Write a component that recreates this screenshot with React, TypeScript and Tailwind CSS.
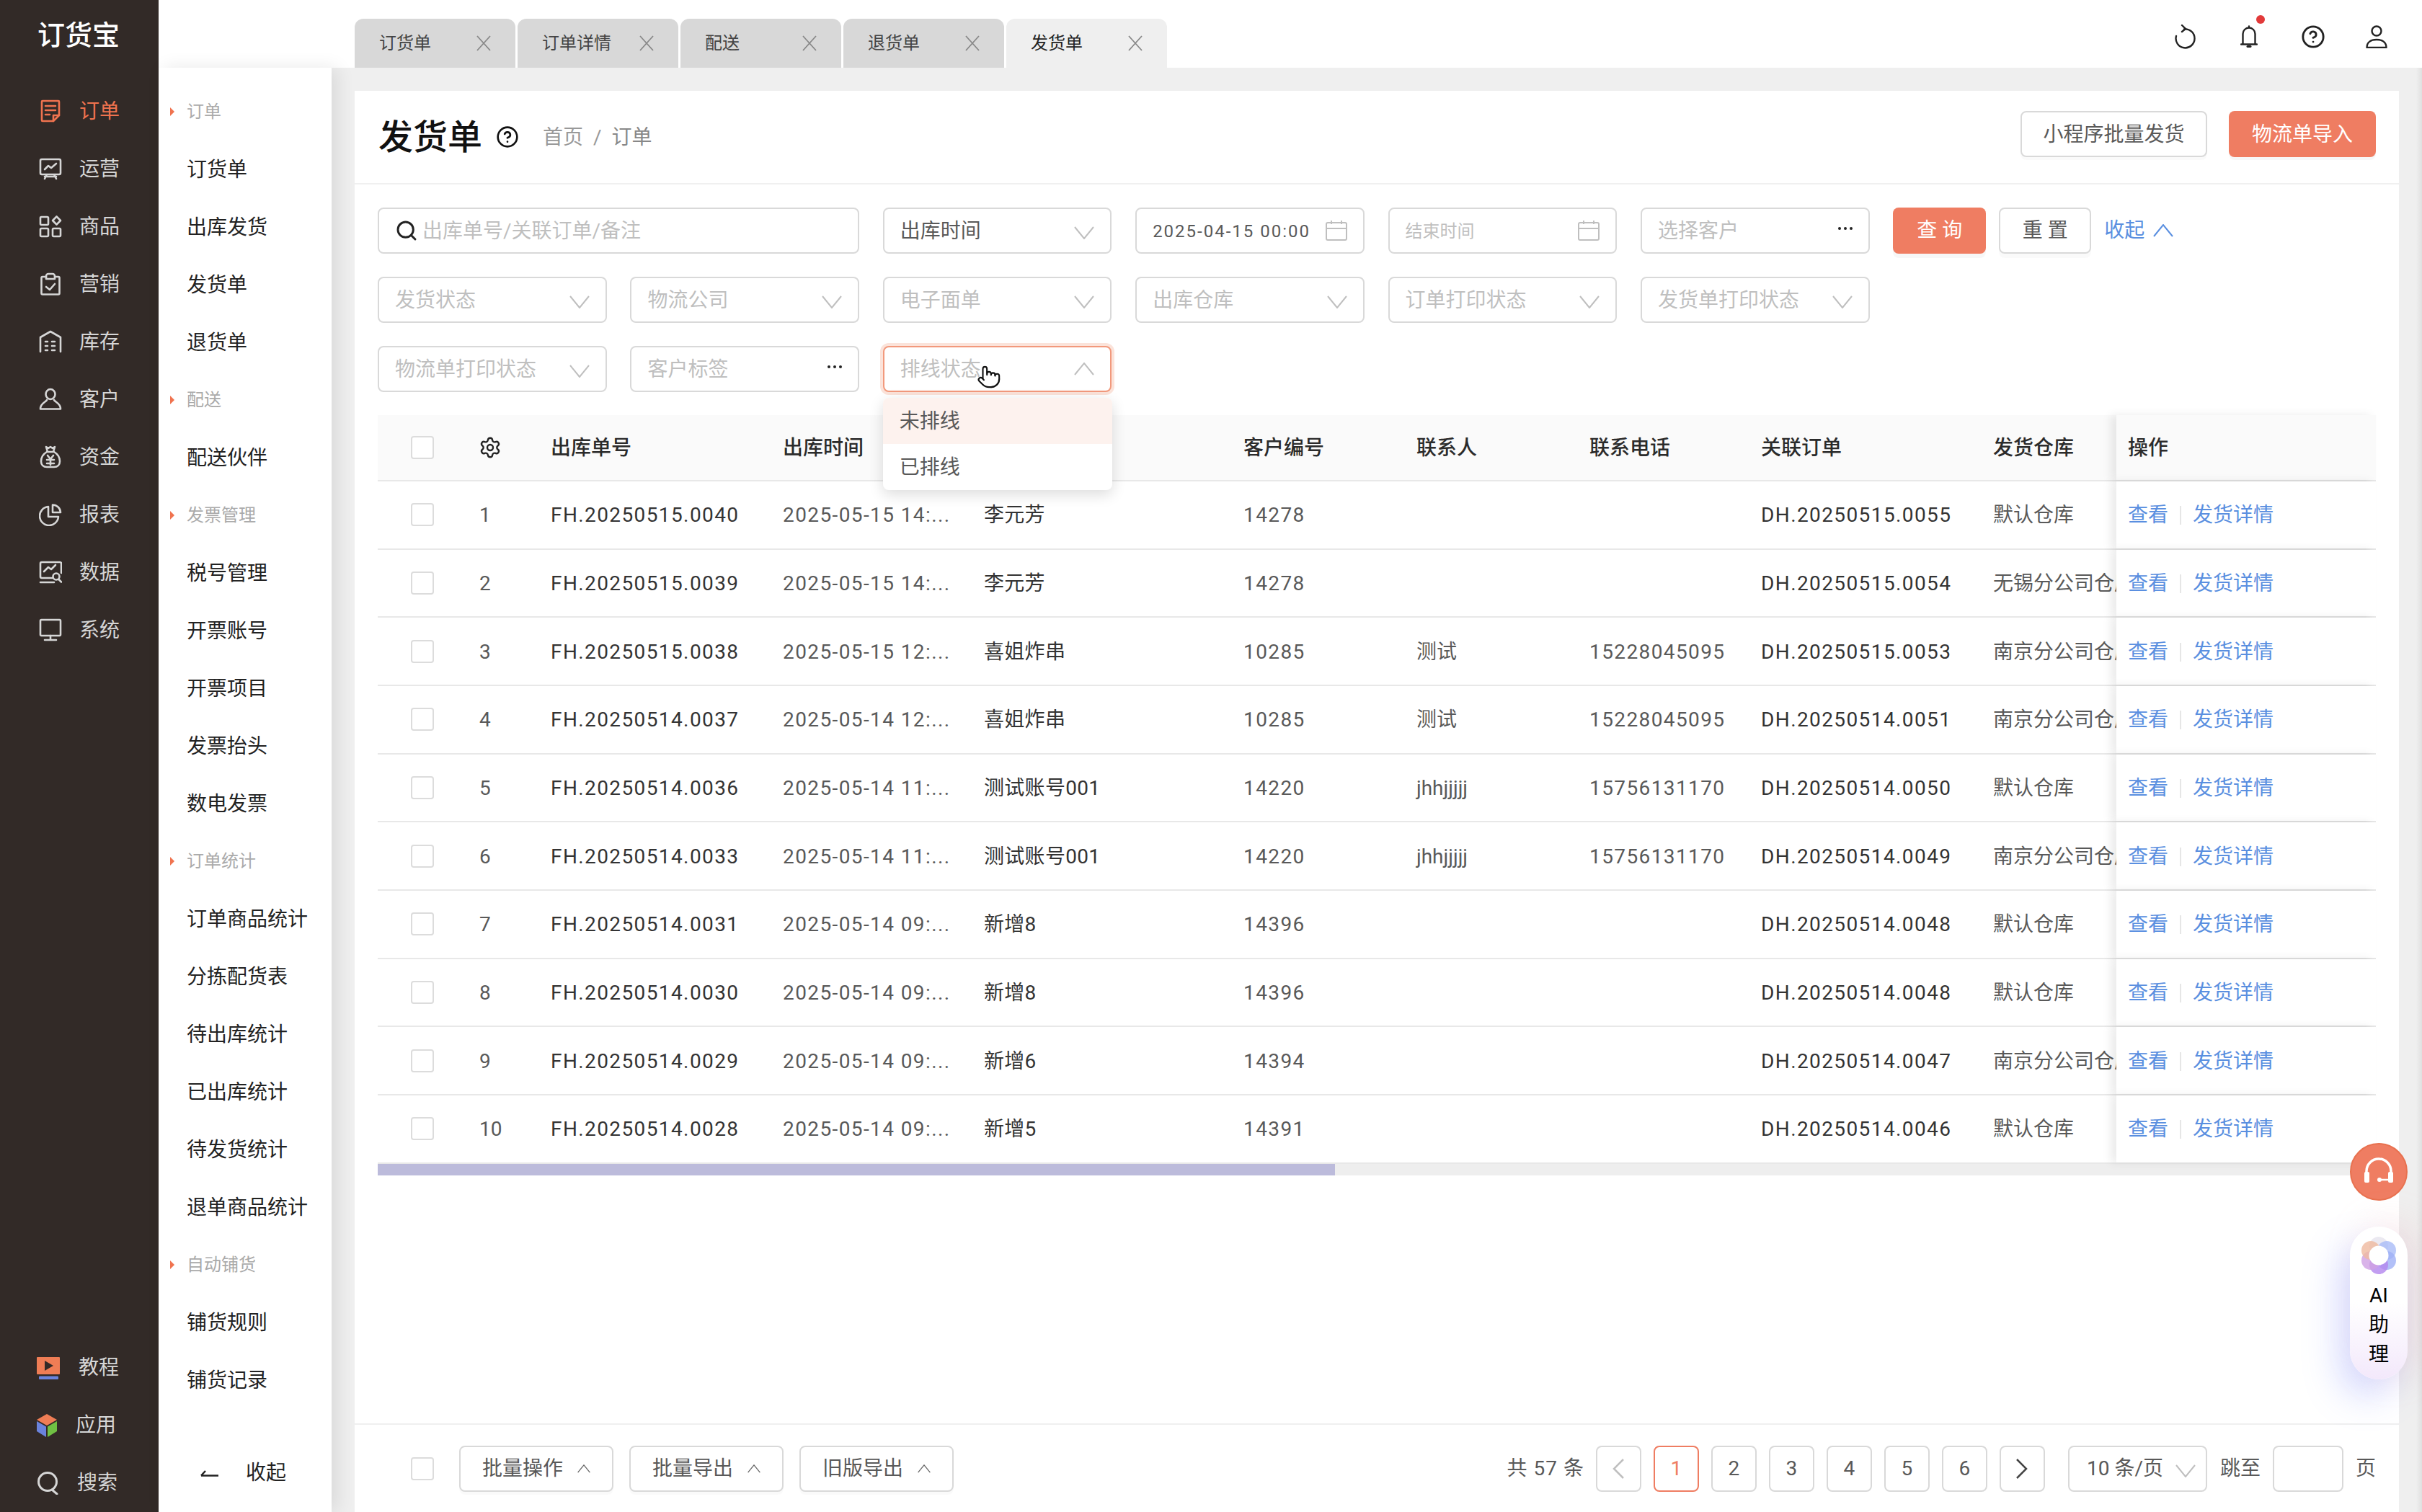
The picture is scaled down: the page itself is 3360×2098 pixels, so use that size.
import type { ReactNode } from 'react';
import { CircleHelp, Pointer, Search, Settings } from 'lucide-react';

const ROW_GRID =
  'grid grid-cols-[141px_99px_322px_279px_360px_240px_240px_238px_322px_171px_360px] items-center';

const rows = [
  ['1', 'FH.20250515.0040', '2025-05-15 14:...', '李元芳', '14278', '', '', 'DH.20250515.0055', '默认仓库'],
  ['2', 'FH.20250515.0039', '2025-05-15 14:...', '李元芳', '14278', '', '', 'DH.20250515.0054', '无锡分公司仓库'],
  ['3', 'FH.20250515.0038', '2025-05-15 12:...', '喜姐炸串', '10285', '测试', '15228045095', 'DH.20250515.0053', '南京分公司仓库'],
  ['4', 'FH.20250514.0037', '2025-05-14 12:...', '喜姐炸串', '10285', '测试', '15228045095', 'DH.20250514.0051', '南京分公司仓库'],
  ['5', 'FH.20250514.0036', '2025-05-14 11:...', '测试账号001', '14220', 'jhhjjjjj', '15756131170', 'DH.20250514.0050', '默认仓库'],
  ['6', 'FH.20250514.0033', '2025-05-14 11:...', '测试账号001', '14220', 'jhhjjjjj', '15756131170', 'DH.20250514.0049', '南京分公司仓库'],
  ['7', 'FH.20250514.0031', '2025-05-14 09:...', '新增8', '14396', '', '', 'DH.20250514.0048', '默认仓库'],
  ['8', 'FH.20250514.0030', '2025-05-14 09:...', '新增8', '14396', '', '', 'DH.20250514.0048', '默认仓库'],
  ['9', 'FH.20250514.0029', '2025-05-14 09:...', '新增6', '14394', '', '', 'DH.20250514.0047', '南京分公司仓库'],
  ['10', 'FH.20250514.0028', '2025-05-14 09:...', '新增5', '14391', '', '', 'DH.20250514.0046', '默认仓库'],
];

const Line = ({ children, size = 32 }: { children: ReactNode; size?: number }) => (
  <svg
    width={size}
    height={size}
    viewBox="0 0 32 32"
    fill="none"
    stroke="currentColor"
    strokeWidth={2.6}
    strokeLinecap="round"
    strokeLinejoin="round"
  >
    {children}
  </svg>
);

const railItems: { label: string; icon: ReactNode }[] = [
  {
    label: '订单',
    icon: (
      <Line>
        <path d="M5 2h22a1 1 0 0 1 1 1v19l-8 8H5a1 1 0 0 1-1-1V3a1 1 0 0 1 1-1Z" />
        <path d="M9 9h14M9 15h14M9 21h6M28 22h-8v8" />
      </Line>
    ),
  },
  {
    label: '运营',
    icon: (
      <Line>
        <path d="M4 3h24a2 2 0 0 1 2 2v17a2 2 0 0 1-2 2H4a2 2 0 0 1-2-2V5a2 2 0 0 1 2-2ZM11 24l-3 6M21 24l3 6M8 27h16" />
        <path d="M8 17l5-5 4 3 7-6" />
      </Line>
    ),
  },
  {
    label: '商品',
    icon: (
      <Line>
        <rect x="2" y="3" width="11" height="11" rx="1.5" />
        <rect x="2" y="19" width="11" height="11" rx="1.5" />
        <rect x="19" y="19" width="11" height="11" rx="1.5" />
        <path d="M24.5 2.5l5.5 5.5-5.5 5.5L19 8Z" />
      </Line>
    ),
  },
  {
    label: '营销',
    icon: (
      <Line>
        <path d="M10 6H5a1.5 1.5 0 0 0-1.500 1.500V29a1.500 1.500 0 0 0 1.500 1.500h22a1.500 1.500 0 0 0 1.500-1.500V7.500A1.500 1.500 0 0 0 27 6h-5" />
        <path d="M10 9V5a3 3 0 0 1 3-3h6a3 3 0 0 1 3 3v4ZM10 20l5 4 7-8" />
      </Line>
    ),
  },
  {
    label: '库存',
    icon: (
      <Line>
        <path d="M2 30V10L16 2l14 8v20" />
        <path d="M9 16h3M18 16h4M9 22h3M18 22h4M9 28h3M18 28h4" />
      </Line>
    ),
  },
  {
    label: '客户',
    icon: (
      <Line>
        <ellipse cx="16" cy="9" rx="6.500" ry="7" />
        <path d="M11 17c-1 3-9 4-9 12.500h28C30 21 22 20 21 17" />
      </Line>
    ),
  },
  {
    label: '资金',
    icon: (
      <Line>
        <path d="M10 2l3 2 3-2 3 2 3-2-2 7h-8Z" />
        <path d="M11 9C6 12 3 17 3 22c0 5 3 8 8 8h10c5 0 8-3 8-8 0-5-3-10-8-13" />
        <path d="M12 14l4 5 4-5M11 20h10M11 25h10M16 19v8" />
      </Line>
    ),
  },
  {
    label: '报表',
    icon: (
      <Line>
        <path d="M13 5a13 13 0 1 0 14 14H13Z" />
        <path d="M19 2.500A11 11 0 0 1 30 13H19Z" />
      </Line>
    ),
  },
  {
    label: '数据',
    icon: (
      <Line>
        <path d="M19 24H4a2 2 0 0 1-2-2V4a2 2 0 0 1 2-2h25a2 2 0 0 1 2 2v13" />
        <path d="M7 15l6-6 4 3 6-6M2 30h19" />
        <circle cx="24" cy="22" r="4.500" />
        <path d="M27.500 26l3.500 3.500" />
      </Line>
    ),
  },
  {
    label: '系统',
    icon: (
      <Line>
        <rect x="2" y="2" width="28" height="22" rx="1.500" />
        <path d="M16 24v6M8 30h16" />
      </Line>
    ),
  },
];

const subMenu: { label: string; head?: boolean }[] = [
  { label: '订单', head: true },
  { label: '订货单' },
  { label: '出库发货' },
  { label: '发货单' },
  { label: '退货单' },
  { label: '配送', head: true },
  { label: '配送伙伴' },
  { label: '发票管理', head: true },
  { label: '税号管理' },
  { label: '开票账号' },
  { label: '开票项目' },
  { label: '发票抬头' },
  { label: '数电发票' },
  { label: '订单统计', head: true },
  { label: '订单商品统计' },
  { label: '分拣配货表' },
  { label: '待出库统计' },
  { label: '已出库统计' },
  { label: '待发货统计' },
  { label: '退单商品统计' },
  { label: '自动铺货', head: true },
  { label: '铺货规则' },
  { label: '铺货记录' },
];

const ChevronDown = () => (
  <svg width="28" height="18" viewBox="0 0 28 18" fill="none" stroke="#bfbfbf" strokeWidth="2" className="shrink-0 mt-[6px]">
    <path d="M1 1l13 16L27 1" />
  </svg>
);

const ChevronUp = ({ color = '#bfbfbf', w = 28, h = 18 }: { color?: string; w?: number; h?: number }) => (
  <svg width={w} height={h} viewBox="0 0 28 18" fill="none" stroke={color} strokeWidth="2" className="shrink-0">
    <path d="M1 17L14 1l13 16" />
  </svg>
);

const Dots = () => (
  <span className="flex gap-[4px] mb-[6px]">
    <i className="w-[4px] h-[4px] rounded-full bg-[#222]" />
    <i className="w-[4px] h-[4px] rounded-full bg-[#222]" />
    <i className="w-[4px] h-[4px] rounded-full bg-[#222]" />
  </span>
);

const CalendarIcon = () => (
  <svg width="30" height="28" viewBox="0 0 30 28" fill="none" stroke="#bfbfbf" strokeWidth="2" className="shrink-0">
    <rect x="1" y="3" width="28" height="24" rx="2" />
    <path d="M1 11h28M8 0v5M22 0v5" />
  </svg>
);

const Field = ({
  label,
  value,
  right,
  small,
  spaced,
}: {
  label: string;
  value?: boolean;
  right: ReactNode;
  small?: boolean;
  spaced?: boolean;
}) => (
  <div
    className={`h-[64px] flex items-center justify-between pl-[22px] pr-[22px] border-2 border-[#d9d9d9] rounded-[8px] bg-white ${
      small ? 'text-[24px]' : 'text-[28px]'
    } ${value ? 'text-[#595959]' : 'text-[#bfbfbf]'} ${spaced ? 'tracking-[2px]' : ''}`}
  >
    <span className="whitespace-nowrap pt-[2px]">{label}</span>
    {right}
  </div>
);

const Checkbox = () => <span className="block w-[32px] h-[32px] rounded-[4px] border-2 border-[#dcdcdc] bg-white" />;

const BulkButton = ({ label }: { label: string }) => (
  <button className="h-[64px] w-[214px] flex items-center justify-center gap-[20px] border-2 border-[#d9d9d9] rounded-[8px] bg-white text-[28px] text-[#595959] shadow-[0_4px_0_rgba(0,0,0,0.02)]">
    {label}
    <ChevronUp color="#666" w={18} h={12} />
  </button>
);

const PageBox = ({ children, active }: { children: ReactNode; active?: boolean }) => (
  <span
    className={`w-[63px] h-[64px] flex items-center justify-center rounded-[8px] border-2 text-[28px] bg-white ${
      active ? 'border-[#ef7d62] text-[#ef7d62]' : 'border-[#d9d9d9] text-[#595959]'
    }`}
  >
    {children}
  </span>
);

const tabs = ['订货单', '订单详情', '配送', '退货单', '发货单'];

const Rail = () => (
  <aside className="w-[220px] shrink-0 h-full bg-[#322a27] flex flex-col text-[#d6d6d6] text-[28px]">
    <div className="h-[114px] pl-[52px] pt-[25px] text-white text-[38px] leading-[48px] font-medium whitespace-nowrap">订货宝</div>
    {railItems.map((item, i) => (
      <div key={item.label} className={`h-[80px] flex items-center pl-[54px] gap-[24px] ${i === 0 ? 'text-[#f0734f]' : ''}`}>
        <span className="w-[32px] h-[32px] shrink-0">{item.icon}</span>
        <span className="pt-[2px]">{item.label}</span>
      </div>
    ))}
    <div className="mt-auto">
      <div className="h-[80px] flex items-center pl-[51px] gap-[26px]">
        <svg width="32" height="31" viewBox="0 0 32 31">
          <rect width="32" height="24" rx="1" fill="#ef7d55" />
          <path d="M11 5l12 7-12 7Z" fill="#322a27" />
          <rect x="3" y="26.500" width="27" height="4.500" rx="1" fill="#6a83dc" />
        </svg>
        <span>教程</span>
      </div>
      <div className="h-[80px] flex items-center pl-[51px] gap-[26px]">
        <svg width="28" height="32" viewBox="0 0 28 32">
          <path d="M14 0l14 8-14 8L0 8Z" fill="#ef7d55" />
          <path d="M0 10l13 7.500V32L0 24Z" fill="#6a83dc" />
          <path d="M28 10l-13 7.500V32l13-8Z" fill="#70c043" />
        </svg>
        <span>应用</span>
      </div>
      <div className="h-[80px] flex items-center pl-[52px] gap-[26px]">
        <svg width="29" height="32" viewBox="0 0 29 32" fill="none" stroke="#d6d6d6" strokeWidth="3">
          <circle cx="14" cy="14" r="12.500" />
          <path d="M20 25l7 6" strokeLinecap="round" />
        </svg>
        <span>搜索</span>
      </div>
    </div>
  </aside>
);

const SubMenu = () => (
  <nav className="relative z-10 w-[240px] shrink-0 bg-white pt-[21px] pb-[14px] flex flex-col shadow-[8px_0_24px_rgba(0,0,0,0.09)]">
    {subMenu.map(item =>
      item.head ? (
        <div key={item.label} className="relative h-[80px] shrink-0 flex items-center pl-[39px] text-[24px] text-[#aaaaaa]">
          <span className="absolute left-[16px] w-0 h-0 border-y-[6px] border-y-transparent border-l-[6px] border-l-[#f0734f]" />
          {item.label}
        </div>
      ) : (
        <div key={item.label} className="h-[80px] shrink-0 flex items-center pl-[39px] pt-[2px] text-[28px] text-[#222222]">
          {item.label}
        </div>
      ),
    )}
    <div className="mt-auto h-[80px] flex items-center pl-[58px] text-[28px] text-[#222222]">
      <svg width="26" height="10" viewBox="0 0 26 10" fill="none" stroke="#222" strokeWidth="2.500">
        <path d="M1 8.500h24M1 8.500L7 2" />
      </svg>
      <span className="ml-[37px]">收起</span>
    </div>
  </nav>
);

const Filters = () => (
  <div className="grid grid-cols-[repeat(6,317.700px)_auto] gap-x-[32.700px] gap-y-[32px] pt-[32px] items-start">
    <div className="col-span-2 h-[64px] flex items-center pl-[22px] border-2 border-[#d9d9d9] rounded-[8px] text-[28px] text-[#bfbfbf]">
      <Search size={32} strokeWidth={2.2} className="text-[#222] shrink-0 mr-[6px]" />
      <span className="pt-[2px]">出库单号/关联订单/备注</span>
    </div>
    <Field label="出库时间" value right={<ChevronDown />} />
    <Field label="2025-04-15 00:00" value small spaced right={<CalendarIcon />} />
    <Field label="结束时间" small right={<CalendarIcon />} />
    <Field label="选择客户" right={<Dots />} />
    <div className="flex items-center gap-[18px] text-[28px]">
      <button className="w-[129px] h-[64px] rounded-[8px] bg-[#ef7d62] text-white shadow-[0_6px_0_rgba(0,0,0,0.03)]">查 询</button>
      <button className="w-[128px] h-[64px] rounded-[8px] border-2 border-[#d9d9d9] text-[#595959] shadow-[0_6px_0_rgba(0,0,0,0.02)]">重 置</button>
      <span className="flex items-center gap-[12px] text-[#5a8fe0] whitespace-nowrap">
        收起
        <ChevronUp color="#5a8fe0" />
      </span>
    </div>
    {['发货状态', '物流公司', '电子面单', '出库仓库', '订单打印状态', '发货单打印状态'].map(label => (
      <Field key={label} label={label} right={<ChevronDown />} />
    ))}
    <div className="col-start-1">
      <Field label="物流单打印状态" right={<ChevronDown />} />
    </div>
    <Field label="客户标签" right={<Dots />} />
    <div className="relative z-20">
      <div className="h-[64px] flex items-center justify-between px-[22px] border-2 border-[#f2997c] rounded-[8px] bg-white text-[28px] text-[#bfbfbf] shadow-[0_0_0_4px_#fbe3da]">
        <span className="pt-[2px]">排线状态</span>
        <ChevronUp />
      </div>
      <Pointer size={34} strokeWidth={1.5} fill="white" color="#111" className="absolute left-[130px] top-[26px]" />
      <div className="absolute left-0 top-[72px] w-[318px] rounded-[8px] bg-white overflow-hidden text-[28px] text-[#595959] shadow-[0_6px_20px_rgba(0,0,0,0.14)]">
        <div className="h-[64px] flex items-center pl-[23px] pt-[2px] bg-[#fdf2ee]">未排线</div>
        <div className="h-[64px] flex items-center pl-[23px] pt-[2px]">已排线</div>
      </div>
    </div>
  </div>
);

const Table = () => (
  <div className="mt-[32px] text-[28px]">
    <div className={`${ROW_GRID} h-[92px] bg-[#fafafa] border-b-2 border-[#e8e8e8] font-medium text-[#2b2b2b]`}>
      <span className="pl-[46px]">
        <Checkbox />
      </span>
      <Settings size={32} strokeWidth={1.8} className="ml-[-1px] text-[#222]" />
      <span className="pt-[2px]">出库单号</span>
      <span className="pt-[2px]">出库时间</span>
      <span />
      <span className="pt-[2px]">客户编号</span>
      <span className="pt-[2px]">联系人</span>
      <span className="pt-[2px]">联系电话</span>
      <span className="pt-[2px]">关联订单</span>
      <span className="pt-[2px]">发货仓库</span>
      <span className="h-full flex items-center pl-[16px] pt-[2px] bg-[#fafafa] shadow-[-8px_0_12px_rgba(0,0,0,0.08)]">操作</span>
    </div>
    {rows.map(r => (
      <div key={r[0]} className={`${ROW_GRID} h-[94.670px] border-b-2 border-[#e8e8e8] text-[#595959]`}>
        <span className="pl-[46px]">
          <Checkbox />
        </span>
        <span className="pt-[2px]">{r[0]}</span>
        <span className="pt-[2px] text-[#333333] tracking-[1.400px]">{r[1]}</span>
        <span className="pt-[2px] tracking-[1.400px]">{r[2]}</span>
        <span className="pt-[2px] text-[#333333] tracking-[0.300px]">{r[3]}</span>
        <span className="pt-[2px] tracking-[1.400px]">{r[4]}</span>
        <span className="pt-[2px]">{r[5]}</span>
        <span className="pt-[2px] tracking-[1.400px]">{r[6]}</span>
        <span className="pt-[2px] text-[#333333] tracking-[1.400px]">{r[7]}</span>
        <span className="pt-[2px] overflow-hidden whitespace-nowrap">{r[8]}</span>
        <span className="h-full flex items-center pl-[16px] pt-[2px] bg-white text-[#5a8fe0] shadow-[-8px_0_12px_rgba(0,0,0,0.08)]">
          查看
          <i className="mx-[16px] w-[2px] h-[26px] bg-[#e6e6e6]" />
          发货详情
        </span>
      </div>
    ))}
    <div className="h-[16px] bg-[#eeeeee]">
      <div className="h-full w-[1328px] bg-[#bcbbdb]" />
    </div>
  </div>
);

const Footer = () => (
  <div className="mt-auto h-[123px] border-t-2 border-[#f0f0f0] px-[32px] flex items-center text-[28px] text-[#595959]">
    <span className="ml-[46px] mr-[35px]">
      <Checkbox />
    </span>
    <div className="flex gap-[22px]">
      <BulkButton label="批量操作" />
      <BulkButton label="批量导出" />
      <BulkButton label="旧版导出" />
    </div>
    <div className="ml-auto flex items-center">
      <span className="mr-[16px] whitespace-nowrap tracking-[1px]">共 57 条</span>
      <div className="flex gap-[17px]">
        <PageBox>
          <svg width="18" height="30" viewBox="0 0 18 30" fill="none" stroke="#bfbfbf" strokeWidth="2.500">
            <path d="M16 2L3 15l13 13" />
          </svg>
        </PageBox>
        <PageBox active>1</PageBox>
        <PageBox>2</PageBox>
        <PageBox>3</PageBox>
        <PageBox>4</PageBox>
        <PageBox>5</PageBox>
        <PageBox>6</PageBox>
        <PageBox>
          <svg width="18" height="30" viewBox="0 0 18 30" fill="none" stroke="#444" strokeWidth="2.500">
            <path d="M2 2l13 13L2 28" />
          </svg>
        </PageBox>
      </div>
      <div className="ml-[32px] w-[193px] h-[64px] flex items-center justify-between pl-[24px] pr-[14px] border-2 border-[#d9d9d9] rounded-[8px] whitespace-nowrap">
        10 条/页
        <ChevronDown />
      </div>
      <span className="ml-[18px] whitespace-nowrap">跳至</span>
      <span className="ml-[17px] w-[98px] h-[64px] border-2 border-[#d9d9d9] rounded-[8px]" />
      <span className="ml-[17px]">页</span>
    </div>
  </div>
);

export default function App() {
  return (
    <div className="relative flex w-[3360px] h-[2098px] overflow-hidden bg-white font-['Roboto','Noto_Sans_CJK_SC',sans-serif]">
      <Rail />
      <div className="flex-1 flex flex-col min-w-0">
        <header className="relative h-[94px] shrink-0 bg-white flex items-end pl-[272px]">
          <div className="flex gap-[3px]">
            {tabs.map((tab, i) => (
              <div
                key={tab}
                className={`w-[223px] h-[68px] rounded-t-[12px] flex items-center justify-between pl-[34px] pr-[34px] text-[24px] ${
                  i === 4 ? 'bg-[#efefef] text-[#222222]' : 'bg-[#d8d8d8] text-[#444444]'
                }`}
              >
                {tab}
                <svg width="20" height="22" viewBox="0 0 20 22" fill="none" stroke="#888" strokeWidth="1.800">
                  <path d="M1 1l18 20M19 1L1 21" />
                </svg>
              </div>
            ))}
          </div>
          <div className="absolute right-[48px] top-[34px] flex items-center gap-[56px] text-[#222]">
            <svg width="32" height="34" viewBox="0 0 32 34" fill="none" stroke="currentColor" strokeWidth="2.400" strokeLinecap="round">
              <path d="M14 6.500A13 13 0 1 1 3 16" />
              <path d="M11 1l5 5-5 4" />
            </svg>
            <span className="relative w-[32px] h-[32px] flex justify-center">
              <svg width="24" height="32" viewBox="0 0 24 32" fill="none" stroke="currentColor" strokeWidth="2.400" strokeLinecap="round">
                <path d="M3.500 26V12a8.500 8.500 0 0 1 17 0v14M1 26.500h22M12 1.500v2" />
                <path d="M10 29.500h4" strokeWidth="3" />
              </svg>
              <i className="absolute left-[26px] -top-[14px] w-[12px] h-[12px] rounded-full bg-[#e23a3a]" />
            </span>
            <CircleHelp size={34} strokeWidth={2} />
            <svg width="30" height="32" viewBox="0 0 30 32" fill="none" stroke="currentColor" strokeWidth="2.400">
              <circle cx="15" cy="8" r="6.500" />
              <path d="M1.500 31c0-7 5-11 13.500-11s13.500 4 13.500 11Z" strokeLinejoin="round" />
            </svg>
          </div>
        </header>
        <div className="flex-1 flex min-h-0">
          <SubMenu />
          <main className="relative flex-1 bg-[#efefef] pt-[32px] pl-[32px] pr-[32px] flex min-w-0">
            <div className="flex-1 bg-white flex flex-col min-w-0">
              <div className="h-[130px] shrink-0 border-b-2 border-[#f0f0f0] flex items-center pl-[33px] pr-[32px]">
                <h1 className="text-[48px] font-medium text-[#111111] pt-[2px]">发货单</h1>
                <CircleHelp size={32} strokeWidth={2} className="ml-[19px] text-[#111]" />
                <span className="ml-[33px] pt-[2px] text-[28px] text-[#999999] whitespace-nowrap">首页</span>
                <span className="mx-[14px] pt-[2px] text-[28px] text-[#999999]">/</span>
                <span className="pt-[2px] text-[28px] text-[#888888]">订单</span>
                <button className="ml-auto -mt-[8px] pt-[2px] w-[259px] h-[64px] border-2 border-[#d9d9d9] rounded-[8px] text-[28px] text-[#595959] shadow-[0_4px_0_rgba(0,0,0,0.02)]">
                  小程序批量发货
                </button>
                <button className="ml-[30px] -mt-[8px] pt-[2px] w-[204px] h-[64px] rounded-[8px] bg-[#ef7d62] text-[28px] text-white shadow-[0_4px_0_rgba(0,0,0,0.03)]">
                  物流单导入
                </button>
              </div>
              <div className="px-[32px]">
                <Filters />
                <Table />
              </div>
              <Footer />
            </div>
            <div className="absolute right-0 top-0 bottom-0 w-[8px] bg-gradient-to-r from-transparent to-[#e0e0e0]" />
          </main>
        </div>
      </div>

      <div className="absolute left-[3260px] top-[1586px] w-[80px] h-[80px] rounded-full bg-[#ef7d62] border-2 border-[#e8714f] flex items-center justify-center">
        <svg width="42" height="40" viewBox="0 0 42 40" fill="none">
          <path d="M4 24v-5a17 17 0 0 1 34 0v5" stroke="white" strokeWidth="3.500" />
          <rect x="1" y="20" width="7" height="15" rx="2" fill="white" />
          <rect x="34" y="20" width="7" height="15" rx="2" fill="white" />
          <path d="M22 31h14" stroke="white" strokeWidth="2.500" />
          <circle cx="22" cy="31" r="3" fill="white" />
        </svg>
      </div>
      <div className="absolute left-[3260px] top-[1702px] w-[80px] h-[212px] rounded-full bg-gradient-to-b from-white via-white to-[#f3e8fb] flex flex-col items-center pt-[13px] text-[28px] leading-[41px] text-black shadow-[-16px_24px_50px_rgba(110,130,255,0.28),16px_-6px_50px_rgba(240,170,170,0.22)]">
        <svg width="54" height="54" viewBox="0 0 54 54" className="mb-[8px] shrink-0">
          <circle cx="27" cy="14" r="13" fill="#e6e3ee" opacity="0.8" />
          <circle cx="38" cy="20" r="13" fill="#a9bcf8" opacity="0.8" />
          <circle cx="38" cy="34" r="13" fill="#9fb0f6" opacity="0.8" />
          <circle cx="27" cy="40" r="13" fill="#b386ee" opacity="0.8" />
          <circle cx="16" cy="34" r="13" fill="#cfa0e4" opacity="0.8" />
          <circle cx="16" cy="20" r="13" fill="#efb99f" opacity="0.8" />
          <circle cx="27" cy="27" r="13.500" fill="white" />
        </svg>
        <span>AI</span>
        <span>助</span>
        <span>理</span>
      </div>
    </div>
  );
}
